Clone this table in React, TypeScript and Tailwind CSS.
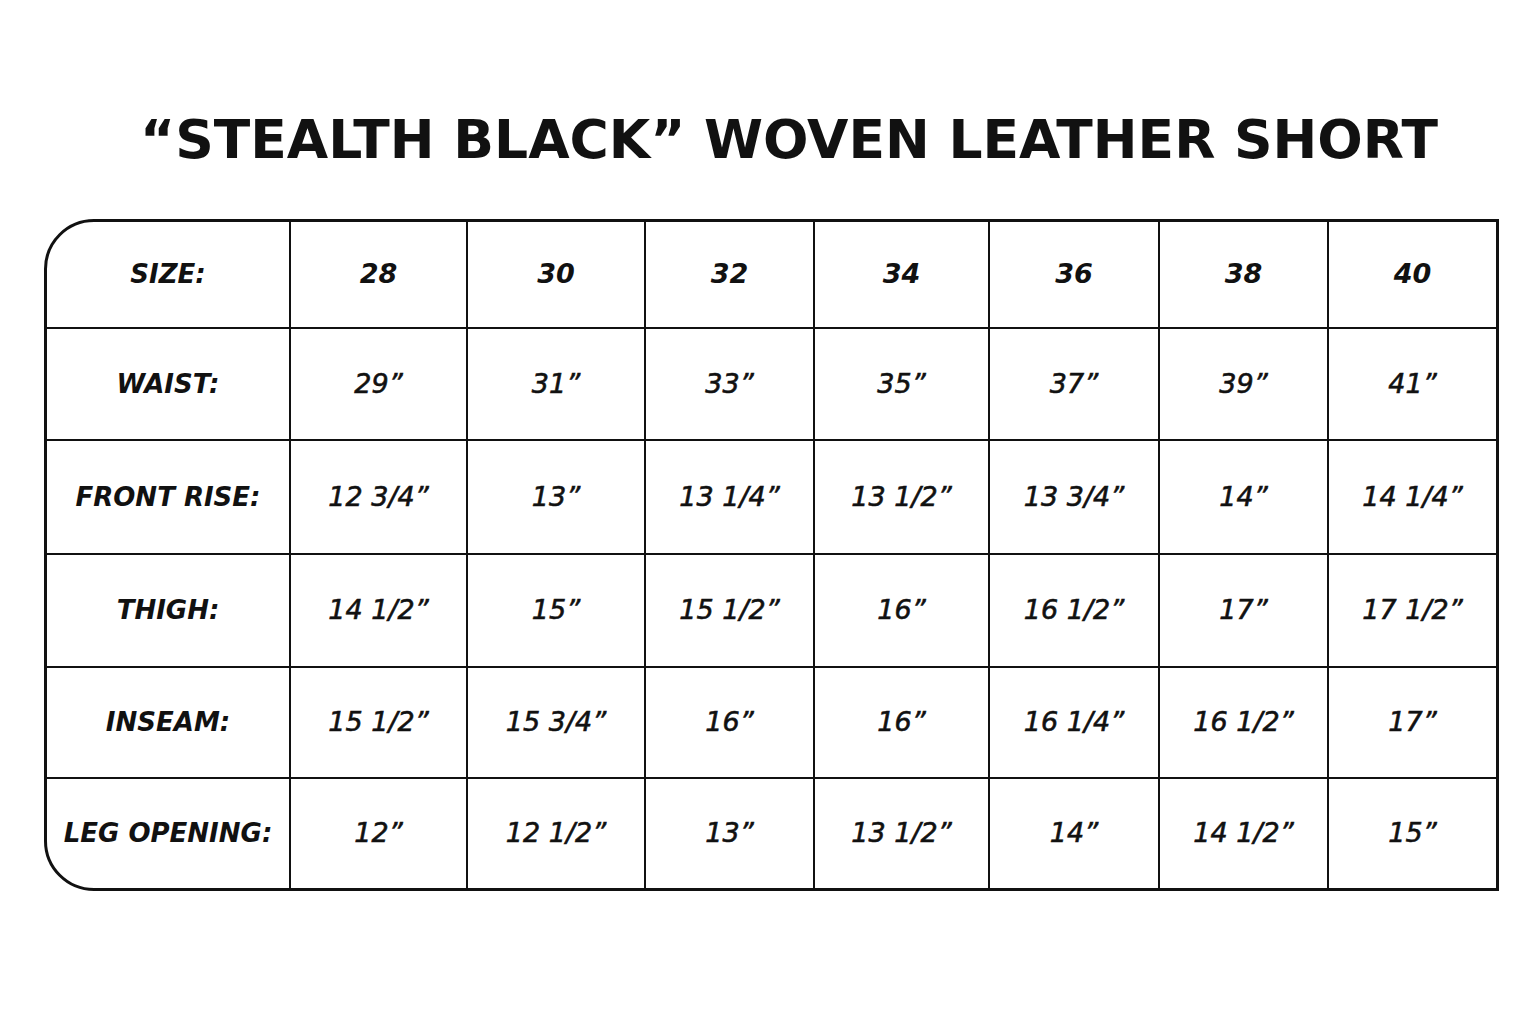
import React from 'react';

// ===== Data =====

const sizes = ['28', '30', '32', '34', '36', '38', '40'];

const rows: { label: string; values: string[] }[] = [
    { label: 'WAIST:', values: ['29”', '31”', '33”', '35”', '37”', '39”', '41”'] },
    { label: 'FRONT RISE:', values: ['12 3/4”', '13”', '13 1/4”', '13 1/2”', '13 3/4”', '14”', '14 1/4”'] },
    { label: 'THIGH:', values: ['14 1/2”', '15”', '15 1/2”', '16”', '16 1/2”', '17”', '17 1/2”'] },
    { label: 'INSEAM:', values: ['15 1/2”', '15 3/4”', '16”', '16”', '16 1/4”', '16 1/2”', '17”'] },
    { label: 'LEG OPENING:', values: ['12”', '12 1/2”', '13”', '13 1/2”', '14”', '14 1/2”', '15”'] },
];

const rowHeights = ['h-[107px]', 'h-[112px]', 'h-[114px]', 'h-[113px]', 'h-[111px]', 'h-[109px]'];

const font = "font-['DejaVu_Sans',sans-serif]";

// ===== Cell =====

const Cell = ({ children, bold, label, last, bottom, height }: { children: React.ReactNode; bold?: boolean; label?: boolean; last?: boolean; bottom?: boolean; height: string }) => (
    <div
        className={[
            'flex items-center justify-center italic text-[#111]',
            height,
            label ? 'text-[26px]' : 'text-[27px]',
            last ? '' : 'border-r-2 border-[#111]',
            bottom ? '' : 'border-b-2 border-[#111]',
            bold ? 'font-bold' : 'font-normal [-webkit-text-stroke:0.6px_#111]',
        ].join(' ')}
    >
        {children}
    </div>
);

// ===== App =====

export default function App() {
    return (
        <div className={`w-[1536px] h-[1024px] bg-white ${font}`}>
            <div className="pt-[110px] pl-[140px]">
                <h1 className="text-[53.5px] leading-[60px] font-bold text-[#111] whitespace-nowrap">
                    “STEALTH BLACK” WOVEN LEATHER SHORT
                </h1>
            </div>

            <div className="mt-[49px] ml-[44px] w-[1455px] border-[3px] border-[#111] rounded-l-[50px] overflow-hidden">
                <div className="grid grid-cols-[244px_177px_178px_169px_175px_170px_169px_167px]">
                    <Cell bold label height={rowHeights[0]}>SIZE:</Cell>
                    {sizes.map((s, i) => (
                        <Cell key={s} bold last={i === sizes.length - 1} height={rowHeights[0]}>
                            {s}
                        </Cell>
                    ))}
                    {rows.map((row, r) => (
                        <React.Fragment key={row.label}>
                            <Cell bold label bottom={r === rows.length - 1} height={rowHeights[r + 1]}>
                                {row.label}
                            </Cell>
                            {row.values.map((v, i) => (
                                <Cell
                                    key={i}
                                    last={i === row.values.length - 1}
                                    bottom={r === rows.length - 1}
                                    height={rowHeights[r + 1]}
                                >
                                    {v}
                                </Cell>
                            ))}
                        </React.Fragment>
                    ))}
                </div>
            </div>
        </div>
    );
}
